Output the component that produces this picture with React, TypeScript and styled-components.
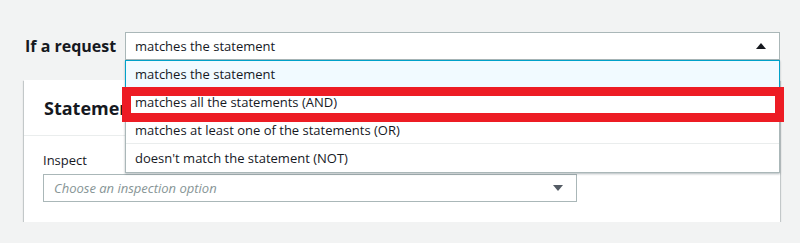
import React from "react";
import styled, { createGlobalStyle } from "styled-components";

const GlobalStyle = createGlobalStyle`
  html, body {
    margin: 0;
    padding: 0;
    background: #f2f3f3;
    font-family: "Open Sans", "Liberation Sans", Arial, sans-serif;
    color: #16191f;
  }
`;

const options = [
  "matches the statement",
  "matches all the statements (AND)",
  "matches at least one of the statements (OR)",
  "doesn't match the statement (NOT)",
];

function Caret({ up, color }: { up?: boolean; color: string }) {
  return (
    <svg width="10" height="6" viewBox="0 0 10 6">
      <path d={up ? "M0 6 L5 0 L10 6 Z" : "M0 0 L10 0 L5 6 Z"} fill={color} />
    </svg>
  );
}

function App() {
  return (
    <>
      <GlobalStyle />
      <StPage>
        <StRow>
          <StRowLabel>If a request</StRowLabel>
          <StSelectWrap>
            <StSelect>
              <span>matches the statement</span>
              <Caret up color="#16191f" />
            </StSelect>
            <StDropdown>
              {options.map((item, i) => (
                <StOption key={item} $active={i === 0}>
                  {item}
                </StOption>
              ))}
            </StDropdown>
            <StHighlight />
          </StSelectWrap>
        </StRow>
        <StCard>
          <StCardHeader>Statement</StCardHeader>
          <StCardBody>
            <StLabel>Inspect</StLabel>
            <StInspectSelect>
              <StPlaceholder>Choose an inspection option</StPlaceholder>
              <Caret color="#545b64" />
            </StInspectSelect>
          </StCardBody>
        </StCard>
      </StPage>
    </>
  );
}

export default App;

const StPage = styled.div`
  width: 756px;
  padding: 32px 0 0 24px;
`;

const StRow = styled.div`
  display: flex;
  align-items: center;
`;

const StRowLabel = styled.div`
  width: 101px;
  font-size: 16px;
  font-weight: bold;
  padding-left: 1px;
  box-sizing: border-box;
`;

const StSelectWrap = styled.div`
  position: relative;
  flex: 1;
`;

const StSelect = styled.div`
  display: flex;
  align-items: center;
  justify-content: space-between;
  height: 28px;
  box-sizing: border-box;
  padding: 0 13px 0 9px;
  background: #fff;
  border: 1px solid #aab7b8;
  font-size: 13px;
`;

const StDropdown = styled.div`
  position: absolute;
  top: 28px;
  left: 0;
  right: 0;
  z-index: 2;
  background: #fff;
  border: 1px solid #aab7b8;
  border-top: none;
  box-shadow: 0 1px 2px rgba(0, 28, 36, 0.3);
`;

const StOption = styled.div<{ $active: boolean }>`
  height: 28px;
  box-sizing: border-box;
  display: flex;
  align-items: center;
  padding-left: 9px;
  font-size: 13px;
  background: ${(p) => (p.$active ? "#f1faff" : "#fff")};
  border: ${(p) => (p.$active ? "1px solid #00a1c9" : "none")};
  border-bottom: 1px solid ${(p) => (p.$active ? "#00a1c9" : "#eaeded")};
  margin: ${(p) => (p.$active ? "0 -1px" : "0")};
  &:last-child {
    border-bottom: none;
  }
`;

const StHighlight = styled.div`
  position: absolute;
  z-index: 3;
  left: -3px;
  top: 55px;
  width: 662px;
  height: 35px;
  box-sizing: border-box;
  border: 9px solid #ed1c24;
`;

const StCard = styled.div`
  margin-top: 20px;
  background: #fff;
  box-shadow: 0 1px 1px 0 rgba(0, 28, 36, 0.3), 1px 1px 1px 0 rgba(0, 28, 36, 0.15),
    -1px 1px 1px 0 rgba(0, 28, 36, 0.15);
`;

const StCardHeader = styled.div`
  height: 56px;
  box-sizing: border-box;
  display: flex;
  align-items: center;
  padding: 0 20px;
  border-bottom: 1px solid #eaeded;
  font-size: 18px;
  font-weight: bold;
`;

const StCardBody = styled.div`
  padding: 14px 20px 20px 19px;
`;

const StLabel = styled.div`
  font-size: 13px;
  line-height: 20px;
  margin-bottom: 4px;
`;

const StInspectSelect = styled.div`
  width: 534px;
  height: 28px;
  box-sizing: border-box;
  display: flex;
  align-items: center;
  justify-content: space-between;
  padding: 0 13px 0 10px;
  border: 1px solid #aab7b8;
  background: #fff;
`;

const StPlaceholder = styled.span`
  font-size: 13px;
  font-style: italic;
  color: #879596;
`;
